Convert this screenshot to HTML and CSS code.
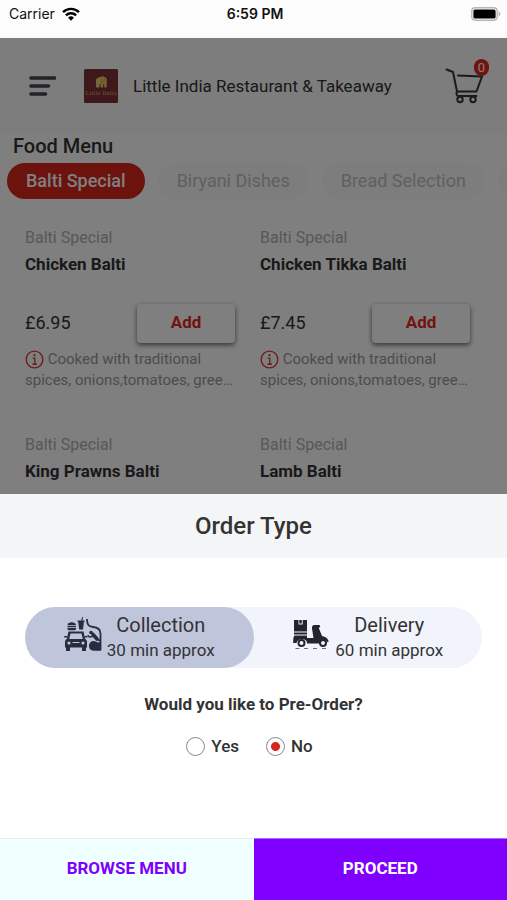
FILE: index.html
```html
<!DOCTYPE html>
<html lang="en">
<head>
<meta charset="utf-8">
<meta name="viewport" content="width=device-width, initial-scale=1">
<title>Little India Restaurant &amp; Takeaway</title>
<link rel="stylesheet" href="styles.css">
</head>
<body>
<div class="status">
  <div class="status-carrier">
    <span>Carrier</span>
    <svg class="wifi" viewBox="0 0 18 14" aria-hidden="true">
      <g fill="none" stroke="#000" stroke-width="2.4">
        <path d="M1 5.2a11.4 11.4 0 0 1 16 0"/>
        <path d="M3.9 8.3a7.2 7.2 0 0 1 10.2 0"/>
      </g>
      <path d="M9 13.8 6.1 10.8a4.1 4.1 0 0 1 5.8 0z"/>
    </svg>
  </div>
  <time class="status-time">6:59 PM</time>
  <svg class="battery" viewBox="0 0 30 14" aria-hidden="true">
    <rect x=".8" y=".8" width="25.4" height="12.4" rx="3.4" fill="#fff" stroke="#b5b5b2" stroke-width="1.4"/>
    <rect x="2.4" y="2.4" width="22.2" height="9.2" rx="1.6"/>
    <path d="M27.6 4.6c2.4.8 2.4 4 0 4.8z" fill="#b5b5b2"/>
  </svg>
</div>

<main class="app">
  <header class="topbar">
    <button class="icon-button" type="button" aria-label="Menu">
      <svg class="burger" viewBox="0 0 28 20" fill="none" stroke="#44444f" stroke-width="3.6" stroke-linecap="round" aria-hidden="true">
        <path d="M3 2h23.500M3 10h17.500M3 18h14.500"/>
      </svg>
    </button>
    <svg class="logo" viewBox="0 0 34 34" aria-hidden="true">
      <rect width="34" height="34" rx="1.5" fill="#7c3034"/>
      <path d="M12 18.500v-5.500c-.8-2 .4-4 2.500-4.500l3-.8c1-.8 2.200-.2 2.700.4 2 .2 2.800 1.700 2.600 3.500l-.3 6.900h-2.300v-3.600l-.8.1-.3 3.500h-2.600v-3.600h-.7l-.5 3.600z" fill="#f0ca70"/>
      <path d="M17.500 9v5.500M20.400 9.500l-.6 4" stroke="#a5834a" stroke-width=".7"/>
      <text class="logo-text" x="17" y="26" text-anchor="middle">Little India</text>
    </svg>
    <h1 class="brand">Little India Restaurant &amp; Takeaway</h1>
    <button class="icon-button cart" type="button" aria-label="Cart">
      <svg class="cart-icon" viewBox="0 0 38 36" fill="none" stroke="#35353b" stroke-width="2" stroke-linecap="round" stroke-linejoin="round" aria-hidden="true">
        <path d="M1.500 1.500 8 4l4 19.500h19.500L37 8.500 13 7.500"/>
        <path d="M12 23.500c-1 1.500-.5 4.500 1 4.500h18.500"/>
        <circle cx="15" cy="31.500" r="2.700"/><circle cx="28" cy="31.500" r="2.700"/>
      </svg>
      <span class="badge">0</span>
    </button>
  </header>

  <h2 class="section-title">Food Menu</h2>
  <nav class="tabs">
    <button class="tab tab-active" type="button">Balti Special</button>
    <button class="tab" type="button">Biryani Dishes</button>
    <button class="tab" type="button">Bread Selection</button>
    <button class="tab" type="button" aria-label="More"></button>
  </nav>

  <section class="dishes">
    <article class="dish">
      <p class="category">Balti Special</p>
      <h3 class="name">Chicken Balti</h3>
      <div class="buy"><span class="price">£6.95</span><button class="add" type="button">Add</button></div>
      <p class="about"><svg class="info" viewBox="0 0 20 20" aria-hidden="true"><circle cx="10" cy="10" r="8.800"/><path d="M8 8.500h2.300V15M7.800 15h4.800"/><circle class="dot" cx="10" cy="5.400" r="1.200"/></svg> Cooked with traditional spices, onions,tomatoes, gree…</p>
    </article>
    <article class="dish">
      <p class="category">Balti Special</p>
      <h3 class="name">Chicken Tikka Balti</h3>
      <div class="buy"><span class="price">£7.45</span><button class="add" type="button">Add</button></div>
      <p class="about"><svg class="info" viewBox="0 0 20 20" aria-hidden="true"><circle cx="10" cy="10" r="8.800"/><path d="M8 8.500h2.300V15M7.800 15h4.800"/><circle class="dot" cx="10" cy="5.400" r="1.200"/></svg> Cooked with traditional spices, onions,tomatoes, gree…</p>
    </article>
    <article class="dish">
      <p class="category">Balti Special</p>
      <h3 class="name">King Prawns Balti</h3>
    </article>
    <article class="dish">
      <p class="category">Balti Special</p>
      <h3 class="name">Lamb Balti</h3>
    </article>
  </section>
</main>

<form class="sheet">
  <h2 class="sheet-title">Order Type</h2>
  <div class="sheet-body">
    <div class="modes">
      <button class="mode mode-active" type="button">
        <svg class="mode-icon" viewBox="0 0 38 36" fill="#292c3c" aria-hidden="true">
          <path d="M3.500 9c0-3.800 8.500-3.800 8.500 0zM3.500 9.800H12v1.500H3.500zM3.500 12H12v.8c0 1-.5 1.400-1.200 1.400H4.700c-.7 0-1.200-.4-1.200-1.400z"/>
          <path d="M13.500 4.500h3.800l.8-3.500 1 .3-.7 3.200h2.300v1.300h-.8L19 13.500h-3.800l-1-7.700h-.7z"/>
          <path d="M23 3c0 6 1.500 7.500 6 8 5 .5 7.500 2 7.500 6.500V34" fill="none" stroke="#292c3c" stroke-width="1.800"/>
          <path fill-rule="evenodd" d="M4.500 15.500h15l1.700 7.500c1.200.6 1.800 1.600 1.800 3v5.500h-1V35h-4v-3.500H6V35H2v-3.500H1V26c0-1.400.6-2.400 1.800-3zM6.500 17.500 5.200 23h13.600l-1.300-5.500z"/>
          <path d="M.2 20h3v1.600h-3zM20.800 20h2.500v1.600h-2.500z"/>
          <circle cx="5" cy="27" r="1.600" fill="#bfc6dc"/><circle cx="19" cy="27" r="1.600" fill="#bfc6dc"/>
          <path d="M8.500 26.500h7" stroke="#bfc6dc"/>
          <circle cx="27" cy="16.500" r="1.800"/>
          <path d="m29 18.500 4 4.500" fill="none" stroke="#292c3c" stroke-width="3.600" stroke-linecap="round"/>
          <path d="m28.500 20.500-3 .5-2-1.700M33 23l3.500 2" fill="none" stroke="#292c3c" stroke-width="1.600"/>
          <path d="M37 26v8.800h-7.500a5 5 0 0 1-4.500-5c0-2.500 1.800-4.800 4.500-4.800 2 0 3.500 1.500 5 1.500z"/>
        </svg>
        <span class="mode-text"><span class="mode-name">Collection</span><span class="mode-time">30 min approx</span></span>
      </button>
      <button class="mode" type="button">
        <svg class="mode-icon" viewBox="0 0 38 36" fill="#23252c" aria-hidden="true">
          <path d="M2 4h4.500v4.500h4.200V4H15v11.500H2zM7.300 4h2.500v3.500H7.300zM2 16.500h13v2H2z"/>
          <path d="M2.500 19.500H15V22h6.500L20 12.500c-.3-1.800.5-3.500 2.500-3.500h5l.8 1.500-1.500 1.500 3.200 8c3.500.5 6 2.500 6.700 5.500l-1 .8c-1.600-2.700-6.300-3-8 1.200H15c.5-5.500-9.500-6-10.500-.5H1.200c0-4 .2-6.500 1.300-7.500z"/>
          <circle cx="9.500" cy="27" r="3" fill="none" stroke="#23252c" stroke-width="2"/>
          <circle cx="31" cy="27" r="3" fill="none" stroke="#23252c" stroke-width="2"/>
          <path d="M3.500 32.500h4M12 32.500h4M21 32.500h4M30 32.500h4" stroke="#6d7078" stroke-width="1.200"/>
        </svg>
        <span class="mode-text"><span class="mode-name">Delivery</span><span class="mode-time">60 min approx</span></span>
      </button>
    </div>
    <fieldset class="preorder">
      <legend class="question">Would you like to Pre-Order?</legend>
      <div class="choices">
        <label class="choice"><input class="radio" type="radio" name="preorder" value="yes">Yes</label>
        <label class="choice"><input class="radio" type="radio" name="preorder" value="no" checked>No</label>
      </div>
    </fieldset>
  </div>
  <div class="actions">
    <button class="action" type="button">BROWSE MENU</button>
    <button class="action action-primary" type="button">PROCEED</button>
  </div>
</form>
</body>
</html>
```

FILE: styles.css
```css
* {
  box-sizing: border-box;
}

body {
  margin: 0;
  height: 100vh;
  display: flex;
  flex-direction: column;
  background: #fff;
  color: #333;
  font-family: Roboto, sans-serif;
}

h1, h2, h3, p {
  margin: 0;
}

button {
  border: 0;
  padding: 0;
  background: none;
  color: inherit;
  font: inherit;
}

/* Status bar */
.status {
  flex: none;
  height: 38px;
  padding: 0 6px 10px 9px;
  display: grid;
  grid-template-columns: 1fr auto 1fr;
  align-items: center;
  background: #fcfcfc;
  color: #111;
  font-family: Inter, sans-serif;
  font-size: 14px;
  line-height: 18px;
}

.status-carrier {
  display: flex;
  align-items: center;
  gap: 7px;
}

.wifi {
  width: 18px;
  height: 14px;
}

.status-time {
  font-weight: 600;
}

.battery {
  width: 30px;
  height: 14px;
  justify-self: end;
}

/* Menu page behind the sheet */
.app {
  position: relative;
  flex: 1;
  min-height: 0;
  overflow: hidden;
}

.app::after {
  content: "";
  position: absolute;
  inset: 0;
  background: rgba(0, 0, 0, 0.5);
}

.topbar {
  height: 95px;
  padding: 0 16px 0 28px;
  display: flex;
  align-items: center;
  background: #fafafa;
}

.icon-button {
  flex: none;
  display: flex;
}

.burger {
  width: 28px;
  height: 20px;
}

.logo {
  flex: none;
  width: 34px;
  height: 34px;
  margin: 0 15px 0 28px;
}

.logo-text {
  fill: #d0a860;
  font: 7px "Liberation Serif", serif;
}

.brand {
  flex: 1;
  font-size: 17px;
  font-weight: 400;
  line-height: 24px;
}

.cart {
  position: relative;
  padding-right: 8px;
}

.cart-icon {
  width: 38px;
  height: 36px;
}

.badge {
  position: absolute;
  top: -9px;
  right: 2px;
  width: 15px;
  height: 17px;
  border-radius: 8px;
  background: #e3271c;
  color: #fff;
  font-size: 13px;
  line-height: 17px;
  text-align: center;
}

.section-title {
  padding: 0 13px;
  font-size: 20px;
  font-weight: 500;
  line-height: 26px;
}

.tabs {
  display: flex;
  gap: 13px;
  padding: 4px 7px 0;
  overflow: hidden;
}

.tab {
  flex: none;
  height: 36px;
  padding: 0 19px 2px;
  border-radius: 18px;
  background: #fafafa;
  color: #c0c0c0;
  font-size: 18px;
}

.tab-active {
  background: #d9261c;
  color: #fff;
  font-weight: 500;
}

.dishes {
  display: grid;
  grid-template-columns: 1fr 1fr;
  gap: 44px 25px;
  padding: 29px 37px 0 25px;
}

.category {
  color: #b0b0b0;
  font-size: 16px;
  line-height: 20px;
}

.name {
  margin-top: 4px;
  font-size: 17px;
  font-weight: 700;
  line-height: 24px;
}

.buy {
  display: flex;
  align-items: center;
  justify-content: space-between;
  margin-top: 28px;
}

.price {
  padding-bottom: 3px;
  font-size: 18px;
}

.add {
  width: 98px;
  height: 39px;
  padding-bottom: 3px;
  border-radius: 4px;
  background: #fff;
  box-shadow: 0 2px 5px rgba(0, 0, 0, 0.6);
  color: #e3271c;
  font-size: 17px;
  font-weight: 700;
}

.about {
  display: -webkit-box;
  -webkit-box-orient: vertical;
  -webkit-line-clamp: 2;
  overflow: hidden;
  margin-top: 6px;
  color: #999;
  font-size: 15px;
  line-height: 21px;
}

.info {
  width: 19px;
  height: 19px;
  vertical-align: -5px;
  fill: none;
  stroke: #d93a3f;
  stroke-width: 1.4;
}

.dot {
  fill: #d93a3f;
  stroke: none;
}

/* Order sheet */
.sheet {
  flex: none;
  display: flex;
  flex-direction: column;
  background: #fff;
}

.sheet-title {
  height: 64px;
  background: #f3f5f7;
  font-size: 24px;
  font-weight: 500;
  line-height: 64px;
  text-align: center;
}

.sheet-body {
  padding: 49px 25px 80px;
}

.modes {
  display: grid;
  grid-template-columns: 1fr 1fr;
  border-radius: 31px;
  background: #f2f4fb;
}

.mode {
  height: 61px;
  padding-bottom: 2px;
  display: flex;
  align-items: center;
  justify-content: center;
  gap: 5px;
  border-radius: 31px;
}

.mode-active {
  background: #bfc6dc;
}

.mode-icon {
  width: 38px;
  height: 36px;
  margin-bottom: 5px;
}

.mode-text {
  display: flex;
  flex-direction: column;
  align-items: center;
}

.mode-name {
  font-size: 20px;
  line-height: 26px;
}

.mode-time {
  font-size: 17px;
  line-height: 24px;
}

.preorder {
  margin: 24px 0 0;
  padding: 0;
  border: 0;
  min-width: 0;
}

.question {
  width: 100%;
  padding: 0;
  font-size: 17px;
  font-weight: 700;
  line-height: 24px;
  text-align: center;
}

.choices {
  display: flex;
  justify-content: center;
  gap: 27px;
  padding: 18px 8px 0 0;
}

.choice {
  display: flex;
  align-items: center;
  gap: 6px;
  font-size: 17px;
  font-weight: 500;
  line-height: 24px;
}

.radio {
  appearance: none;
  width: 19px;
  height: 19px;
  margin: 0;
  border: 1px solid #888;
  border-radius: 50%;
  background: #fff;
}

.radio:checked {
  background: radial-gradient(circle, #d9261c 4px, #fff 5px);
}

.actions {
  display: grid;
  grid-template-columns: 1fr 1fr;
}

.action {
  height: 62px;
  padding-bottom: 3px;
  border-top: 1px solid #e6ecec;
  background: #f0ffff;
  color: #8000ff;
  font-size: 17px;
  font-weight: 700;
}

.action-primary {
  border-top-color: #b266ff;
  background: #8000ff;
  color: #fff;
}
```
